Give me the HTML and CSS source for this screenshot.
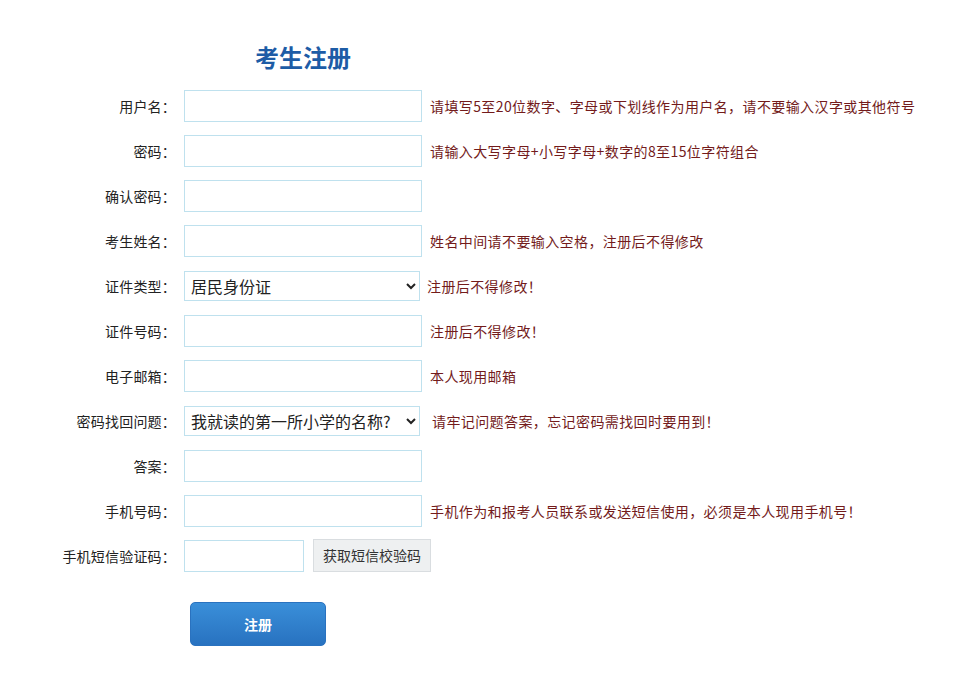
FILE: index.html
```html
<!DOCTYPE html>
<html lang="zh-CN">
<head>
<meta charset="utf-8">
<title>考生注册</title>
<link rel="stylesheet" href="styles.css">
</head>
<body>
<div class="page">
  <h1 class="title">考生注册</h1>
  <form class="form">
    <div class="row">
      <label class="label">用户名：</label>
      <input class="field" type="text">
      <span class="hint">请填写5至20位数字、字母或下划线作为用户名，请不要输入汉字或其他符号</span>
    </div>
    <div class="row">
      <label class="label">密码：</label>
      <input class="field" type="password">
      <span class="hint">请输入大写字母+小写字母+数字的8至15位字符组合</span>
    </div>
    <div class="row">
      <label class="label">确认密码：</label>
      <input class="field" type="password">
    </div>
    <div class="row">
      <label class="label">考生姓名：</label>
      <input class="field" type="text">
      <span class="hint">姓名中间请不要输入空格，注册后不得修改</span>
    </div>
    <div class="row">
      <label class="label">证件类型：</label>
      <select class="field select"><option>居民身份证</option></select>
      <span class="hint hint-sel">注册后不得修改！</span>
    </div>
    <div class="row">
      <label class="label">证件号码：</label>
      <input class="field" type="text">
      <span class="hint">注册后不得修改！</span>
    </div>
    <div class="row">
      <label class="label">电子邮箱：</label>
      <input class="field" type="text">
      <span class="hint">本人现用邮箱</span>
    </div>
    <div class="row">
      <label class="label">密码找回问题：</label>
      <select class="field select"><option>我就读的第一所小学的名称?</option></select>
      <span class="hint hint-sel2">请牢记问题答案，忘记密码需找回时要用到！</span>
    </div>
    <div class="row">
      <label class="label">答案：</label>
      <input class="field" type="text">
    </div>
    <div class="row">
      <label class="label">手机号码：</label>
      <input class="field" type="text">
      <span class="hint">手机作为和报考人员联系或发送短信使用，必须是本人现用手机号！</span>
    </div>
    <div class="row">
      <label class="label">手机短信验证码：</label>
      <input class="field field-short" type="text">
      <button class="sms-btn" type="button">获取短信校验码</button>
    </div>
    <div class="submit-row">
      <button class="submit" type="button">注册</button>
    </div>
  </form>
</div>
</body>
</html>
```
FILE: styles.css
```css
html, body {
  margin: 0;
  padding: 0;
  background: #fff;
}
body {
  font-family: "Noto Sans CJK SC", "Noto Sans", sans-serif;
  font-size: 14px;
  color: #333;
}
.page {
  padding-top: 40px;
}
.title {
  margin: 0 0 17px 255px;
  font-size: 24px;
  line-height: 33px;
  font-weight: bold;
  color: #1d5ca6;
  letter-spacing: 0;
}
.form {
  display: flex;
  flex-direction: column;
  gap: 13px;
}
.row {
  display: flex;
  align-items: center;
  height: 32px;
}
.label {
  width: 176px;
  text-align: right;
  color: #222;
  font-size: 14px;
  line-height: 20px;
  letter-spacing: 0.2px;
  flex: none;
}
.field {
  margin-left: 8px;
  width: 238px;
  height: 32px;
  box-sizing: border-box;
  border: 1px solid #bfe1ee;
  background: #fff;
  padding: 0 5px;
  font-family: "Noto Sans CJK SC", sans-serif;
  font-size: 16px;
  color: #222;
  outline: none;
  flex: none;
}
.select {
  width: 236px;
  height: 30px;
  padding: 0 2px;
}
.field-short {
  width: 120px;
}
.hint {
  margin-left: 8px;
  color: #731b1b;
  font-size: 14px;
  line-height: 20px;
  letter-spacing: 0.4px;
  white-space: nowrap;
}
.hint-sel {
  margin-left: 7px;
}
.hint-sel2 {
  margin-left: 12px;
}
.sms-btn {
  margin-left: 9px;
  width: 118px;
  height: 33px;
  box-sizing: border-box;
  border: 1px solid #d9dde0;
  background: #eef0f1;
  font-family: "Noto Sans CJK SC", sans-serif;
  font-size: 14px;
  color: #333;
  padding: 0;
  position: relative;
  top: -1px;
}
.submit-row {
  margin-top: 17px;
  padding-left: 190px;
}
.submit {
  width: 136px;
  height: 44px;
  border: 1px solid #2a72bf;
  border-radius: 5px;
  background: linear-gradient(#3a8fd9, #2872c0);
  color: #fff;
  font-family: "Noto Sans CJK SC", sans-serif;
  font-size: 14px;
  font-weight: bold;
  padding: 0;
}
```
